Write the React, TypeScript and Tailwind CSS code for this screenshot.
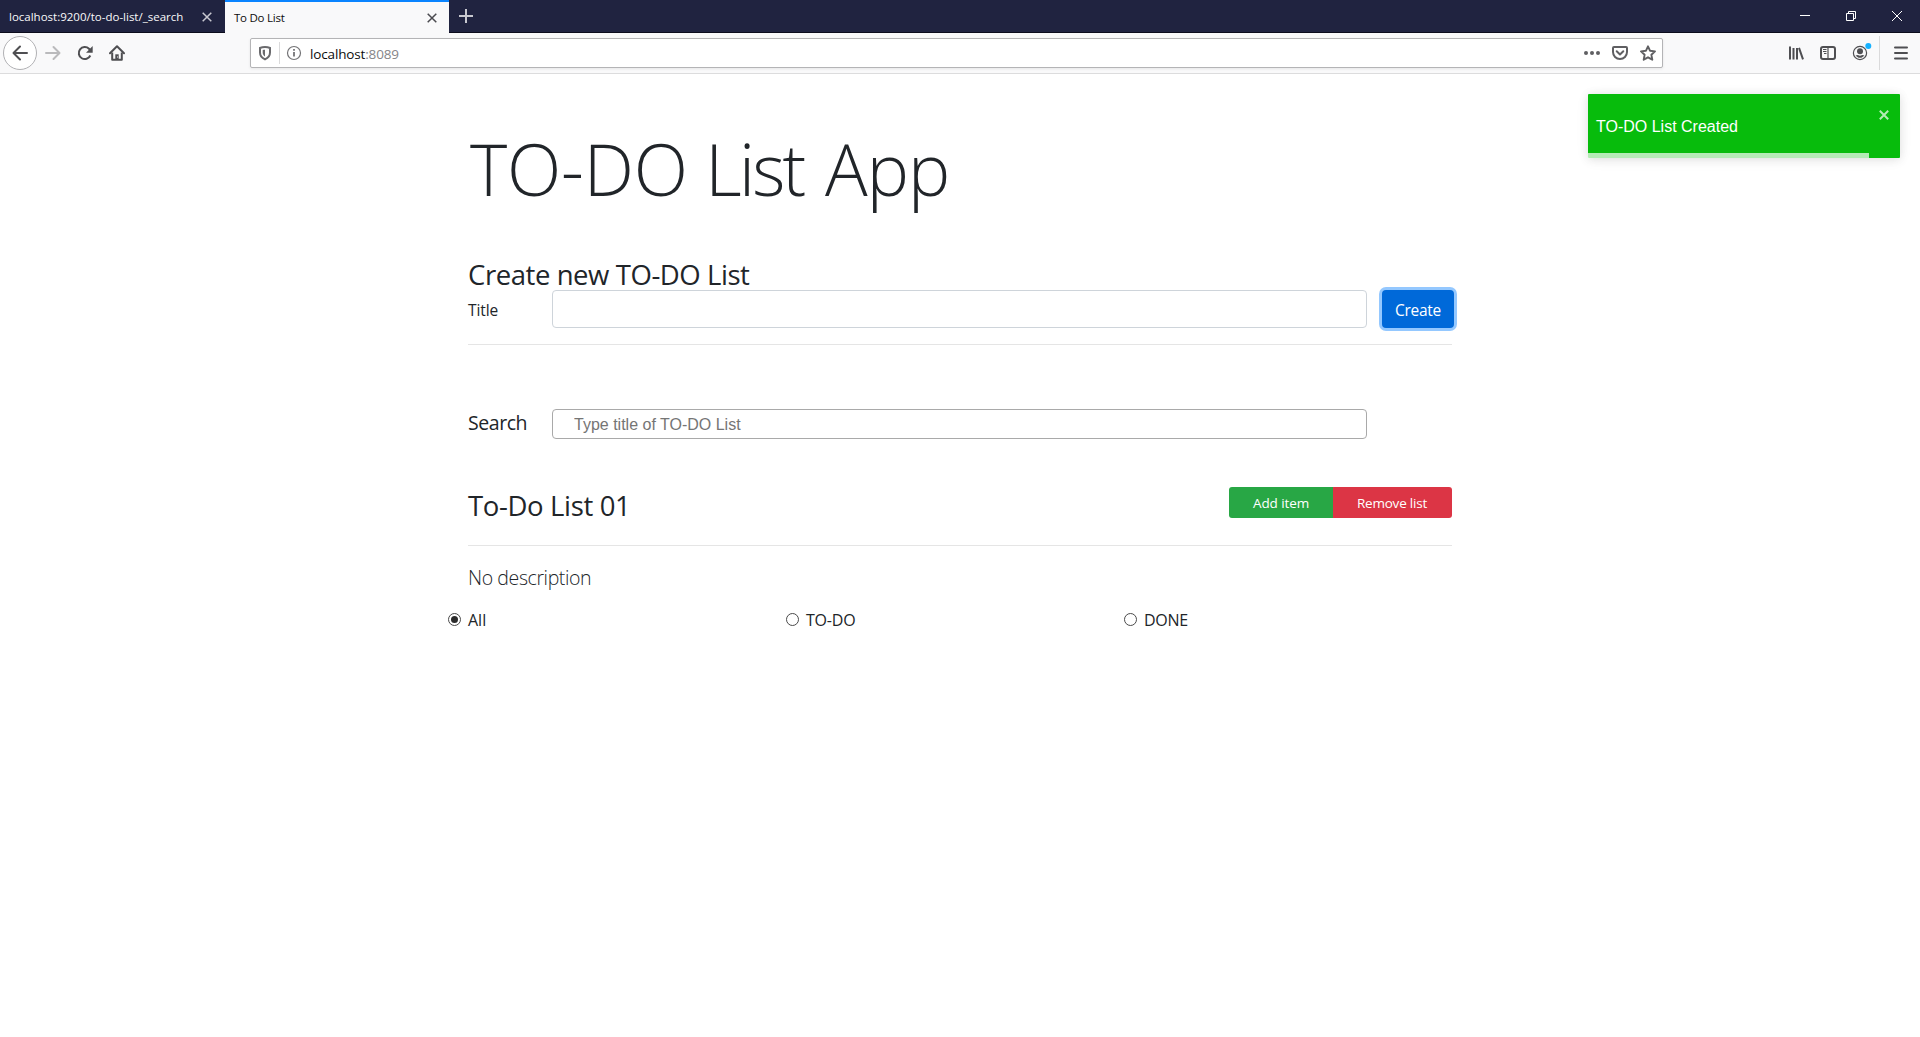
import type { ReactNode } from "react";

function Icon({ w = 16, h = 16, className = "", children }: { w?: number; h?: number; className?: string; children: ReactNode }) {
  return (
    <svg width={w} height={h} viewBox={`0 0 ${w} ${h}`} fill="none" stroke="currentColor" strokeWidth="2" className={`block shrink-0 ${className}`}>
      {children}
    </svg>
  );
}

function Cross({ className = "" }: { className?: string }) {
  return (
    <Icon w={10} h={10} className={className}>
      <path d="M.7.7l8.6 8.6M9.3.7L.7 9.3" strokeWidth="1.5" />
    </Icon>
  );
}

function TabBar() {
  return (
    <div className="flex h-[33px] border-b border-[#0c0c1c] bg-[#202340] text-[11.5px] leading-[16px]">
      <div className="flex w-[225px] items-center pl-[9px] pt-px text-[#f9f9fa]">
        <span className="w-[193px] whitespace-nowrap pt-px">localhost:9200/to-do-list/_search</span>
        <Cross className="text-[#c8c8d0]" />
      </div>
      <div className="flex h-[33px] w-[224px] items-center border-t-2 border-[#0a84ff] bg-[#f9f9fa] pl-[9px] text-[#0c0c0d]">
        <span className="w-[193px] whitespace-nowrap tracking-[-0.25px]">To Do List</span>
        <Cross className="text-[#4a4a4f]" />
      </div>
      <div className="flex flex-1 items-center pl-[10px] text-[#c8c8d0]">
        <Icon w={14} h={14}>
          <path d="M7 0v14M0 7h14" />
        </Icon>
      </div>
      <div className="flex items-center gap-[36px] pr-[18px] text-white">
        <Icon w={10} h={10}>
          <path d="M0 4.500h10" strokeWidth="1" />
        </Icon>
        <Icon w={10} h={10}>
          <path d="M.5 2.500h7v7h-7zM2.500 2.500v-2h7v7h-2" strokeWidth="1" />
        </Icon>
        <Icon w={10} h={10}>
          <path d="M0 0l10 10M10 0L0 10" strokeWidth="1" />
        </Icon>
      </div>
    </div>
  );
}

function Toolbar() {
  return (
    <div className="flex h-[41px] items-center border-b border-[#dcdcdd] bg-[#f9f9fa] pl-[3px] text-[#4f4f52]">
      <div className="flex size-[34px] items-center justify-center rounded-full border border-[#b1b1b4] bg-white">
        <Icon>
          <path d="M15 8H1.800M8 1.500L1.500 8 8 14.500" strokeLinecap="round" strokeLinejoin="round" />
        </Icon>
      </div>
      <Icon className="ml-2 text-[#bababc]">
        <path d="M1 8h13.200M8.500 2L14.500 8l-6 6" strokeLinecap="round" strokeLinejoin="round" />
      </Icon>
      <Icon className="ml-4">
        <path d="M13.300 10.500A6 6 0 1 1 12 3.800L14 6" />
        <path d="M15.700 1v6.700H9z" fill="currentColor" stroke="none" />
      </Icon>
      <Icon className="ml-4">
        <path d="M1 8.200L8 1.300l7 6.900" strokeLinecap="round" strokeLinejoin="round" />
        <path d="M3.200 7.500v7.300h9.600V7.500" strokeLinejoin="round" />
        <path d="M6.300 15V9.300h3.400V15z" fill="currentColor" stroke="none" />
        <path d="M8.500 11.500v1" stroke="#f9f9fa" strokeWidth="1" />
      </Icon>
      <div className="ml-[125px] flex h-[30px] w-[1413px] items-center rounded-[2px] border border-[#b4b4b6] bg-white pl-[6px] shadow-[0_1px_3px_rgba(0,0,0,0.08)]">
        <Icon className="text-[#6a6a6d]">
          <path d="M8 2c1.800 0 3.500.300 5 1v4.500c0 3.200-1.900 5.500-5 6.800-3.100-1.300-5-3.600-5-6.800V3c1.500-.700 3.200-1 5-1z" />
          <path d="M8 4.800v6.700c-1.500-.9-2.300-2.200-2.300-4V5.100c.700-.2 1.500-.3 2.300-.3z" fill="currentColor" stroke="none" />
        </Icon>
        <div className="ml-[6px] h-[22px] w-px bg-[#dadadb]" />
        <Icon className="ml-[6px] text-[#737376]">
          <circle cx="8" cy="8" r="6.500" strokeWidth="1.200" />
          <path d="M8 7v4.600M8 4v1.800" strokeWidth="1.800" />
        </Icon>
        <span className="ml-[8px] flex-1 pt-[1px] text-[13.5px] leading-[18px] tracking-[-0.15px] text-[#0c0c0d]">
          localhost<span className="text-[#858588]">:8089</span>
        </span>
        <Icon className="text-[#5f5f62]">
          <g fill="currentColor" stroke="none">
            <circle cx="2" cy="8" r="2" />
            <circle cx="8" cy="8" r="2" />
            <circle cx="14" cy="8" r="2" />
          </g>
        </Icon>
        <Icon className="ml-3 text-[#5f5f62]">
          <path d="M2 2h12a1 1 0 0 1 1 1v4a7 7 0 0 1-14 0V3a1 1 0 0 1 1-1z" />
          <path d="M4.700 6.300L8 9.500l3.300-3.200" strokeLinecap="round" strokeLinejoin="round" />
        </Icon>
        <Icon className="ml-3 mr-[6px] text-[#5f5f62]">
          <path d="M8 1.300l2.100 4.500 4.900.6-3.600 3.400.9 4.900L8 12.300l-4.300 2.400.9-4.900L1 6.400l4.900-.6z" strokeWidth="1.900" strokeLinejoin="round" />
        </Icon>
      </div>
      <Icon className="ml-[125px]">
        <path d="M2 1.500v13M5.500 3v11.500M9 3v11.500M11 2.800l4 11.500" />
      </Icon>
      <Icon className="ml-4">
        <rect x="1" y="2" width="14" height="12" rx="2" />
        <path d="M8 2v12" strokeWidth="1.200" />
        <path d="M3 4.500h3.500M3 6.500h3.500M4 8.500h2.500" strokeWidth="1" />
      </Icon>
      <Icon w={22} h={20} className="ml-4">
        <circle cx="8" cy="10" r="6.600" strokeWidth="1.200" />
        <circle cx="8" cy="8.200" r="3" fill="currentColor" stroke="none" />
        <path d="M3.600 12.200c1 .300 1.600-.4 2.400-.2.900.9 3.100.9 4 0 .8-.2 1.400.5 2.400.2-.9 1.500-2.500 2.600-4.400 2.600s-3.500-1.100-4.400-2.600z" fill="currentColor" stroke="none" />
        <circle cx="16.300" cy="3" r="3" fill="#15b1ff" stroke="none" />
      </Icon>
      <div className="ml-[5px] h-[34px] w-px bg-[#dadadb]" />
      <Icon className="ml-[13px]">
        <path d="M2 2.500h12M2 8h12M2 13.500h12" strokeLinecap="round" />
      </Icon>
    </div>
  );
}

function Toast() {
  return (
    <div className="absolute right-5 top-[94px] flex h-[64px] w-[312px] flex-col rounded-[1px] bg-[#07bc0c] font-['Liberation_Sans',sans-serif] shadow-[0_1px_10px_rgba(0,0,0,0.1),0_2px_15px_rgba(0,0,0,0.05)]">
      <div className="flex flex-1 justify-between pl-2 pr-[11px]">
        <span className="pt-[23px] text-[16px] leading-[20px] text-white">TO-DO List Created</span>
        <Icon w={10} h={10} className="mt-[16px] text-white/70">
          <path d="M.8.800l8.400 8.400M9.200.8L.8 9.200" />
        </Icon>
      </div>
      <div className="h-[5px] w-[281px] bg-white/70" />
    </div>
  );
}

function Radio({ label, checked = false, tracking = "" }: { label: string; checked?: boolean; tracking?: string }) {
  return (
    <label className="flex w-[338px] items-center">
      <span className="flex size-[13px] items-center justify-center rounded-full border border-[#4a4a4a] bg-white">
        {checked && <span className="size-[7px] rounded-full bg-[#2b2b2b]" />}
      </span>
      <span className={`ml-[7px] pt-px text-[16px] leading-[24px] ${tracking}`}>{label}</span>
    </label>
  );
}

export default function App() {
  return (
    <div className="relative h-[1037px] w-[1920px] overflow-hidden bg-white font-['Open_Sans','Noto_Sans',sans-serif] text-[#212529]">
      <TabBar />
      <Toolbar />
      <Toast />
      <main className="ml-[468px] w-[984px]">
        <h1 className="pt-[52px] text-[71px] font-light leading-[86px] tracking-[-0.9px]">
          <span className="ml-[2px] tracking-[-0.2px]">TO-DO</span>{" "}
          <span className="tracking-[-2.8px]">List</span> <span className="ml-[4px]">App</span>
        </h1>
        <h3 className="mt-[46px] h-[32px] text-[27.5px] leading-[34px] tracking-[-0.43px]">Create new TO-DO List</h3>
        <div className="flex h-[38px]">
          <span className="w-[84px] shrink-0 text-[15.5px] leading-[40px] tracking-[-0.1px]">Title</span>
          <input className="h-[38px] w-[815px] shrink-0 rounded border border-[#ced4da] bg-white outline-none" />
          <button className="ml-[15px] h-[38px] w-[72px] shrink-0 rounded bg-[#0069d9] pt-[3px] text-[15.5px] tracking-[-0.3px] text-white shadow-[0_0_0_3px_#94c8ff]">Create</button>
        </div>
        <div className="mt-4 h-px bg-[#e5e5e5]" />
        <div className="mt-[64px] flex h-[30px]">
          <span className="w-[84px] text-[19.5px] leading-[28px] tracking-[-0.45px]">Search</span>
          <input
            placeholder="Type title of TO-DO List"
            className="h-[30px] w-[815px] rounded border border-[#a9a9a9] bg-white pl-[21px] pt-px font-['Liberation_Sans',sans-serif] text-[16px] outline-none placeholder:text-[#757575]"
          />
        </div>
        <div className="mt-[48px] flex h-[58px] justify-between">
          <h3 className="text-[27.5px] leading-[38px] tracking-[-0.35px]">To-Do List 01</h3>
          <div className="flex h-[31px] text-[13.5px] text-white">
            <button className="w-[104px] rounded-l-[3px] bg-[#28a745] pt-px tracking-[-0.1px]">Add item</button>
            <button className="w-[119px] rounded-r-[3px] bg-[#dc3545] pr-px pt-px tracking-[-0.2px]">Remove list</button>
          </div>
        </div>
        <div className="h-px bg-[#e5e5e5]" />
        <p className="mt-[17px] text-[19.5px] font-light leading-[30px] tracking-[-0.4px]">No description</p>
        <div className="-ml-5 mt-[14px] flex w-[1014px]">
          <Radio label="All" checked />
          <Radio label="TO-DO" tracking="tracking-[-0.2px]" />
          <Radio label="DONE" tracking="tracking-[-0.3px]" />
        </div>
      </main>
    </div>
  );
}
